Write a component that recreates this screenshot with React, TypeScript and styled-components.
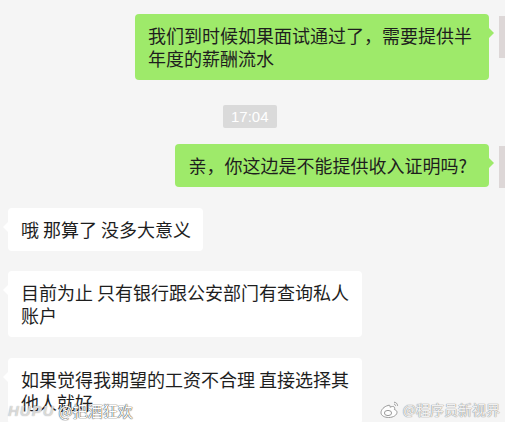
import styled, { createGlobalStyle } from "styled-components";

const GlobalStyle = createGlobalStyle`
  html, body {
    margin: 0;
    padding: 0;
    background: #f5f5f5;
    overflow: hidden;
  }
`;

const CJK = `"Noto Sans CJK SC", "Noto Sans", sans-serif`;

type Msg =
  | { kind: "time"; text: string; top: number }
  | { kind: "msg"; side: "me" | "other"; text: string; top: number; padRight?: number };

const messages: Msg[] = [
  { kind: "msg", side: "me", text: "我们到时候如果面试通过了，需要提供半年度的薪酬流水", top: 14 },
  { kind: "time", text: "17:04", top: 25 },
  { kind: "msg", side: "me", text: "亲，你这边是不能提供收入证明吗?", top: 16, padRight: 22 },
  { kind: "msg", side: "other", text: "哦 那算了 没多大意义", top: 20 },
  { kind: "msg", side: "other", text: "目前为止 只有银行跟公安部门有查询私人账户", top: 20 },
  { kind: "msg", side: "other", text: "如果觉得我期望的工资不合理 直接选择其他人就好", top: 21 },
];

const App = () => {
  return (
    <Page>
      <GlobalStyle />
      <Chat>
        {messages.map((m, i) =>
          m.kind === "time" ? (
            <TimeRow key={i} $top={m.top}>
              <TimeTag>{m.text}</TimeTag>
            </TimeRow>
          ) : (
            <Row key={i} $top={m.top} $me={m.side === "me"}>
              <Bubble $me={m.side === "me"} $padRight={m.padRight ?? 12}>
                {m.text}
              </Bubble>
              {m.side === "me" && <Avatar />}
            </Row>
          )
        )}
      </Chat>

      <HupuMark>
        <HupuLogo>HUPU</HupuLogo>
        <span>@把酒狂欢</span>
      </HupuMark>
      <WeiboMark>
        <svg width="22" height="20" viewBox="0 0 22 20">
          <path
            d="M9 6.5c-4 1-7 4.2-7 7.2 0 3 3.6 4.8 7.6 4.8 5 0 8.4-2.6 8.4-5.2 0-1.6-1.4-2.4-2.6-2.8.8-1.8.2-3-1.8-3-1 0-2 .4-2.6.7.4-1.6-.4-2.6-2-1.7z"
            fill="rgba(255,255,255,0.85)"
            stroke="#9a9a9a"
            strokeWidth="1"
          />
          <ellipse cx="9" cy="14" rx="3.6" ry="2.6" fill="none" stroke="#9a9a9a" strokeWidth="1" />
          <path d="M15 3.2c2 0 3.6 1.6 3.6 3.6M15 5.2c.9 0 1.6.7 1.6 1.6" fill="none" stroke="#9a9a9a" strokeWidth="1" />
        </svg>
        <span>@程序员新视界</span>
      </WeiboMark>
    </Page>
  );
};

export default App;

const Page = styled.div`
  position: relative;
  width: 505px;
  height: 422px;
  overflow: hidden;
  background: #f5f5f5;
`;

const Chat = styled.div`
  display: flex;
  flex-direction: column;
  width: 541px;
  padding-left: 8px;
  box-sizing: border-box;
`;

const Row = styled.div<{ $top: number; $me: boolean }>`
  display: flex;
  align-items: flex-start;
  justify-content: ${(p) => (p.$me ? "flex-end" : "flex-start")};
  gap: 10px;
  margin-top: ${(p) => p.$top}px;
`;

const TimeRow = styled.div<{ $top: number }>`
  display: flex;
  margin-top: ${(p) => p.$top}px;
  padding-left: 215px;
`;

const TimeTag = styled.div`
  background: #dadada;
  color: #ffffff;
  font-family: "Liberation Sans", Arial, sans-serif;
  font-size: 15px;
  line-height: 23px;
  padding: 0 8px;
  border-radius: 2px;
`;

const Bubble = styled.div<{ $me: boolean; $padRight: number }>`
  position: relative;
  max-width: 329px;
  padding: 10px ${(p) => p.$padRight}px 10px 13px;
  border-radius: 4px;
  background: ${(p) => (p.$me ? "#9eea6a" : "#ffffff")};
  color: #1e1e1e;
  font-family: ${CJK};
  font-size: 18px;
  line-height: 23px;

  &::after {
    content: "";
    position: absolute;
    top: 14px;
    ${(p) => (p.$me ? "right: -5px;" : "left: -5px;")}
    border-top: 5px solid transparent;
    border-bottom: 5px solid transparent;
    ${(p) =>
      p.$me
        ? "border-left: 5px solid #9eea6a;"
        : "border-right: 5px solid #ffffff;"}
  }
`;

const Avatar = styled.div`
  flex: 0 0 42px;
  width: 42px;
  height: 42px;
  margin-top: 2px;
  background: #ddd7d7;
`;

const HupuMark = styled.div`
  position: absolute;
  left: 8px;
  bottom: 1px;
  display: flex;
  align-items: center;
  gap: 4px;
  font-family: ${CJK};
  font-size: 15px;
  color: #ffffff;
  text-shadow: 0 0 1px #333, 0 0 1px #333;
`;

const HupuLogo = styled.span`
  font-family: "Liberation Sans", Arial, sans-serif;
  font-style: italic;
  font-weight: bold;
  font-size: 15px;
  letter-spacing: 1px;
  color: rgba(255, 255, 255, 0.6);
  text-shadow: 0 0 1px #999;
`;

const WeiboMark = styled.div`
  position: absolute;
  right: 5px;
  bottom: 3px;
  display: flex;
  align-items: center;
  gap: 2px;
  font-family: ${CJK};
  font-size: 14px;
  color: rgba(255, 255, 255, 0.9);
  text-shadow: 0 0 1px #888, 0 0 1px #888;
`;
